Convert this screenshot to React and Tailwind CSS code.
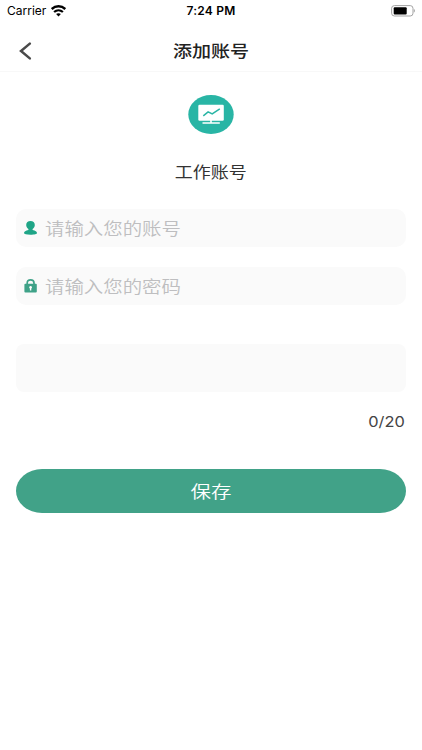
import { useState } from "react";

const StatusBar = () => (
  <div className="h-[22px] px-[7px] grid grid-cols-3 items-center text-black font-['Inter',sans-serif]">
    <div className="flex items-center gap-[5px]">
      <span className="text-[12px] leading-none">Carrier</span>
      <svg width="15" height="12" viewBox="0 0 15 12" fill="none" stroke="currentColor">
        <path d="M0.7 4.1C4.6 0.4 10.4 0.4 14.3 4.1" strokeWidth="2.5" />
        <path d="M3.1 7C5.6 4.7 9.4 4.7 11.9 7" strokeWidth="2.2" />
        <path d="M7.5 11.5L5.1 9.1C6.4 7.8 8.6 7.8 9.9 9.1Z" fill="currentColor" stroke="none" />
      </svg>
    </div>
    <span className="text-center text-[12px] leading-none font-semibold tracking-[0.2px]">7:24 PM</span>
    <div className="flex justify-end">
      <svg width="25" height="12" viewBox="0 0 25 12">
        <rect x="1.6" y="0.6" width="21.4" height="10.4" rx="2.8" fill="none" stroke="#a3a3a3" />
        <rect x="3.7" y="2.2" width="13" height="7.2" rx="1" fill="#000" />
        <path d="M23.9 4.1c1.2.4 1.2 3 0 3.4z" fill="#999" />
      </svg>
    </div>
  </div>
);

const UserIcon = () => (
  <svg width="14" height="14" viewBox="0 0 14 14" fill="#1fa587">
    <path d="M6.5 0C3.900 0 2.200 1.500 2.200 3.900c0 1.700.9 3.100 2.200 4v1C1.700 9.400 0 10.400 0 12c0 1.200 2.600 1.700 6.500 1.700s6.500-.5 6.500-1.700c0-1.600-1.700-2.600-4.400-3.100v-1c1.300-.9 2.200-2.300 2.200-4C10.800 1.500 9.100 0 6.500 0z" />
  </svg>
);

const LockIcon = () => (
  <svg width="14" height="14" viewBox="0 0 14 14">
    <path d="M3.2 6V4.1C3.2 2 4.6.9 6.6.9s3.400 1.100 3.400 3.200V6" fill="none" stroke="#3fa288" strokeWidth="1.700" />
    <rect x="0.4" y="4.8" width="12.4" height="8.7" rx="0.9" fill="#3fa288" />
    <path d="M6.6 6.900a1.400 1.400 0 0 0-.7 2.600v1.900h1.400V9.500A1.400 1.400 0 0 0 6.600 6.900z" fill="#fff" />
  </svg>
);

const Field = ({ icon, type, placeholder, value, onChange }) => (
  <label className="flex items-center h-[38px] pl-2 rounded-[10px] bg-[#fafafa]">
    {icon}
    <input
      type={type}
      placeholder={placeholder}
      value={value}
      onChange={onChange}
      className="ml-[7px] w-[280px] origin-left scale-x-[1.17] bg-transparent text-[16.6px] font-[350] text-[#333] placeholder:text-[#bebec0] outline-none"
    />
  </label>
);

const App = () => {
  const [account, setAccount] = useState("");
  const [password, setPassword] = useState("");
  const [remark, setRemark] = useState("");

  return (
    <div className="w-full min-h-screen bg-white font-['Noto_Sans_CJK_SC',sans-serif]">
      <StatusBar />

      {/* Header */}
      <header className="grid grid-cols-[60px_1fr_60px] items-center h-[50px] border-b border-[#f8f8f8]">
        <button className="pl-[19px] pt-[8px]">
          <svg width="13" height="18" viewBox="0 0 13 18" fill="none" stroke="#4a4a4a" strokeWidth="2.5">
            <path d="M10.8 1.6L2 9l8.8 7.400" strokeLinecap="round" strokeLinejoin="miter" />
          </svg>
        </button>
        <h1 className="pt-[8px] text-center text-[16.3px] font-medium text-[#222] scale-x-[1.17]">添加账号</h1>
      </header>

      <main className="px-4">
        {/* Account type */}
        <div className="flex flex-col items-center pt-[23px]">
          <svg width="46" height="39" viewBox="0 0 46 39">
            <ellipse cx="23" cy="19.5" rx="22.7" ry="19.4" fill="#29b5a5" />
            <rect x="10.3" y="9.8" width="25.5" height="15.9" rx="1.3" fill="#fff" />
            <path d="M22.2 25h1.6v2.300h8v1.500H14.500v-1.500h7.700z" fill="#fff" />
            <path d="M15.300 20.800l4.800-4 4.100 2 7.600-5" fill="none" stroke="#29b5a5" strokeWidth="1.5" />
          </svg>
          <p className="mt-[25px] text-[15.4px] leading-[24px] text-[#333] scale-x-[1.17]">工作账号</p>
        </div>

        {/* Form */}
        <div className="mt-[26px] space-y-[20px]">
          <Field
            icon={<UserIcon />}
            type="text"
            placeholder="请输入您的账号"
            value={account}
            onChange={(e) => setAccount(e.target.value)}
          />
          <Field
            icon={<LockIcon />}
            type="password"
            placeholder="请输入您的密码"
            value={password}
            onChange={(e) => setPassword(e.target.value)}
          />
        </div>

        <textarea
          maxLength={20}
          value={remark}
          onChange={(e) => setRemark(e.target.value)}
          className="block mt-[39px] w-full h-[48px] p-3 rounded-[8px] bg-[#fafafa] resize-none outline-none"
        />
        <p className="mt-[19.5px] pr-[1px] text-right text-[14px] leading-[20px] text-[#444] font-['Inter',sans-serif] origin-right scale-x-[1.17]">
          {remark.length}/20
        </p>

        <button className="block mt-[37.5px] w-full h-[44px] rounded-[26px/22px] bg-[#41a288] text-white text-[17.5px] font-[350]">
          <span className="inline-block scale-x-[1.17] -translate-x-[0.5px]">保存</span>
        </button>
      </main>
    </div>
  );
};

export default App;
